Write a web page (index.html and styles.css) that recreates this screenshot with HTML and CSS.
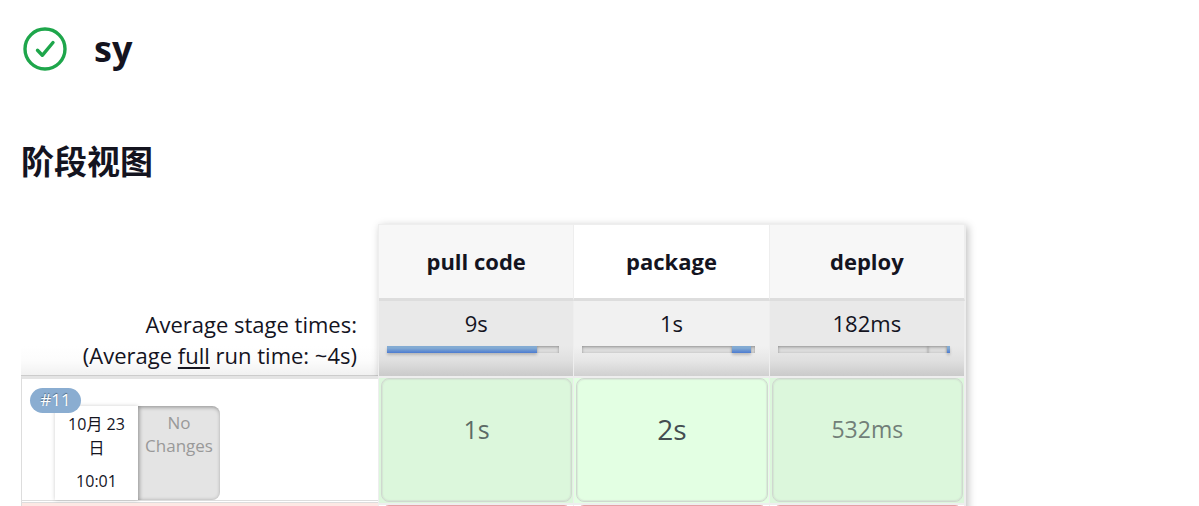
FILE: index.html
```html
<!DOCTYPE html>
<html lang="zh-CN">

<head>
  <title>sy</title>
  <meta charset="UTF-8">
  <meta name="viewport" content="width=device-width, initial-scale=1">
  <link rel="stylesheet" href="styles.css">
</head>

<body>
  <main class="page">
    <header class="job-header">
      <svg class="status-icon" viewBox="0 0 44 44" fill="none" stroke="#1ea64b" stroke-width="3.4" stroke-linecap="round" stroke-linejoin="round" aria-hidden="true">
        <circle cx="22" cy="22" r="20" />
        <path d="M14.5 23.3l4.8 5L30 15.5" />
      </svg>
      <h1>sy</h1>
    </header>

    <h2>阶段视图</h2>

    <div class="stage-view">
      <div class="runs">
        <div class="averages">
          <div>Average stage times:</div>
          <div>(Average <span class="full">full</span> run time: ~4s)</div>
        </div>

        <div class="run">
          <span class="badge">#11</span>
          <div class="run-info">
            <div class="run-date">
              <div>10月 23日</div>
              <div class="run-time">10:01</div>
            </div>
            <div class="changes">No Changes</div>
          </div>
        </div>
        <div class="run failed"></div>
      </div>

      <table class="stages">
        <thead>
          <tr class="names">
            <th scope="col">pull code</th>
            <th scope="col">package</th>
            <th scope="col">deploy</th>
          </tr>
        </thead>
        <tbody>
          <tr class="totals">
            <td>
              <div>9s</div>
              <div class="bar">
                <span class="fill" style="width: 87%"></span>
                <span class="rest"></span>
              </div>
            </td>
            <td>
              <div>1s</div>
              <div class="bar">
                <span class="before" style="width: 87%"></span>
                <span class="fill" style="width: 11%"></span>
                <span class="rest"></span>
              </div>
            </td>
            <td>
              <div>182ms</div>
              <div class="bar">
                <span class="before" style="width: 87%"></span>
                <span class="rest"></span>
                <span class="fill" style="width: 2%"></span>
              </div>
            </td>
          </tr>
          <tr class="success">
            <td><div class="stage medium">1s</div></td>
            <td><div class="stage long">2s</div></td>
            <td><div class="stage short">532ms</div></td>
          </tr>
          <tr class="failure">
            <td><div class="stage"></div></td>
            <td><div class="stage"></div></td>
            <td><div class="stage"></div></td>
          </tr>
        </tbody>
      </table>
    </div>
  </main>
</body>

</html>
```
FILE: styles.css
```css
* {
  box-sizing: border-box;
}

body {
  margin: 0;
  background: #fff;
  color: #14141f;
  font-family: "Open Sans", "Noto Sans CJK SC", sans-serif;
  font-size: 22px;
}

.page {
  height: 100vh;
  overflow: hidden;
  padding: 24px 21px 0;
}

.job-header {
  display: flex;
  align-items: center;
  gap: 27px;
  height: 50px;
  padding-left: 2px;
}

.status-icon {
  width: 44px;
  height: 44px;
}

h1 {
  margin: 0;
  font-size: 36px;
  line-height: 50px;
}

h2 {
  margin: 64px 0 38px;
  font-size: 33px;
  line-height: 48px;
}

.stage-view {
  display: flex;
  align-items: flex-start;
}

/* left column */
.runs {
  width: 357px;
  margin-top: 79px;
}

.averages {
  height: 73px;
  padding: 6px 21px 0 0;
  border-bottom: 1px solid #ccc;
  background: linear-gradient(#fff 60%, #fcfcfc 80%, #f1f1f1);
  line-height: 31px;
  text-align: right;
}

.full {
  text-decoration: underline;
  text-decoration-thickness: 2px;
  text-underline-offset: 3px;
}

.run {
  position: relative;
  height: 127px;
  padding: 27px 0 0 33px;
  border-top: 3px solid #e4e4e4;
  border-left: 1px solid #ddd;
  border-bottom: 3px double #ddd;
  background: #fff;
}

.run.failed {
  border-top: 0;
  background: #fde8e4;
}

.badge {
  position: absolute;
  top: 9px;
  left: 8px;
  z-index: 1;
  width: 51px;
  height: 25px;
  border-radius: 13px;
  background: #8aadd1;
  color: #fff;
  font-size: 17px;
  line-height: 24px;
  text-align: center;
  text-shadow: 0 -1px 1px rgba(0, 0, 0, 0.4);
}

.run-info {
  display: flex;
  width: 165px;
  height: 94px;
  border-radius: 8px;
  font-size: 16px;
  line-height: 24px;
  text-align: center;
}

.run-date {
  width: 83px;
  padding: 6px 8px 0;
  box-shadow: 0 0 4px rgba(0, 0, 0, 0.2);
}

.run-time {
  margin-top: 9px;
}

.changes {
  width: 82px;
  padding: 5px 2px 0;
  border-radius: 0 8px 8px 0;
  background: #e4e4e4;
  box-shadow: inset 1px 1px 4px rgba(0, 0, 0, 0.4);
  color: #999;
  font-size: 17px;
  line-height: 23px;
}

/* stage table */
.stages {
  width: 588px;
  table-layout: fixed;
  border-spacing: 0;
  border: 1px solid #eee;
  box-shadow: 2px 2px 8px rgba(0, 0, 0, 0.25);
  text-align: center;
}

.stages th,
.stages td {
  padding: 0;
  border-right: 1px solid #eee;
}

.names th {
  height: 76px;
  padding-bottom: 2px;
  border-bottom: 3px solid #ddd;
  background: #fff;
}

.names th:nth-child(odd) {
  background: #f7f7f7;
}

.totals td {
  height: 75px;
  padding: 7px 8px 0;
  background: linear-gradient(#f1f1f1 60%, #e6e6e6 80%, #d0d0d0);
  line-height: 31px;
  vertical-align: top;
}

.totals td:nth-child(odd) {
  background: linear-gradient(#e9e9e9 60%, #dfdfdf 80%, #cacaca);
}

.bar {
  display: flex;
  height: 7px;
  margin: 7px 6px 0 0;
}

.bar .before,
.bar .rest {
  background: #dcdcdc;
  box-shadow: inset 0 1px 3px rgba(0, 0, 0, 0.35);
}

.bar .rest {
  flex: 1;
}

.bar .fill {
  background: linear-gradient(#83abd3 30%, #4c7bd0);
  box-shadow: 0 2px 3px rgba(0, 0, 0, 0.2);
}

.success td,
.failure td {
  padding: 0 1px 0 2px;
  border-top: 2px solid #eee;
  vertical-align: top;
}

.success td {
  height: 127px;
  background: #dcf7dc;
}

.success td:nth-child(2) {
  background: #e3ffe3;
}

.stage {
  height: 124px;
  padding-top: 30px;
  border: 1px solid #d0d8d0;
  border-radius: 8px;
  box-shadow: inset 0 0 1px 1px rgba(200, 208, 200, 0.4);
  line-height: 40px;
}

.medium {
  color: #5d6b66;
  font-size: 25px;
}

.long {
  color: #444d50;
  font-size: 28px;
}

.short {
  color: #717f78;
  font-size: 23px;
}

.failure .stage {
  border-color: #e5a0a5;
  background: #ffe6e6;
}
```
